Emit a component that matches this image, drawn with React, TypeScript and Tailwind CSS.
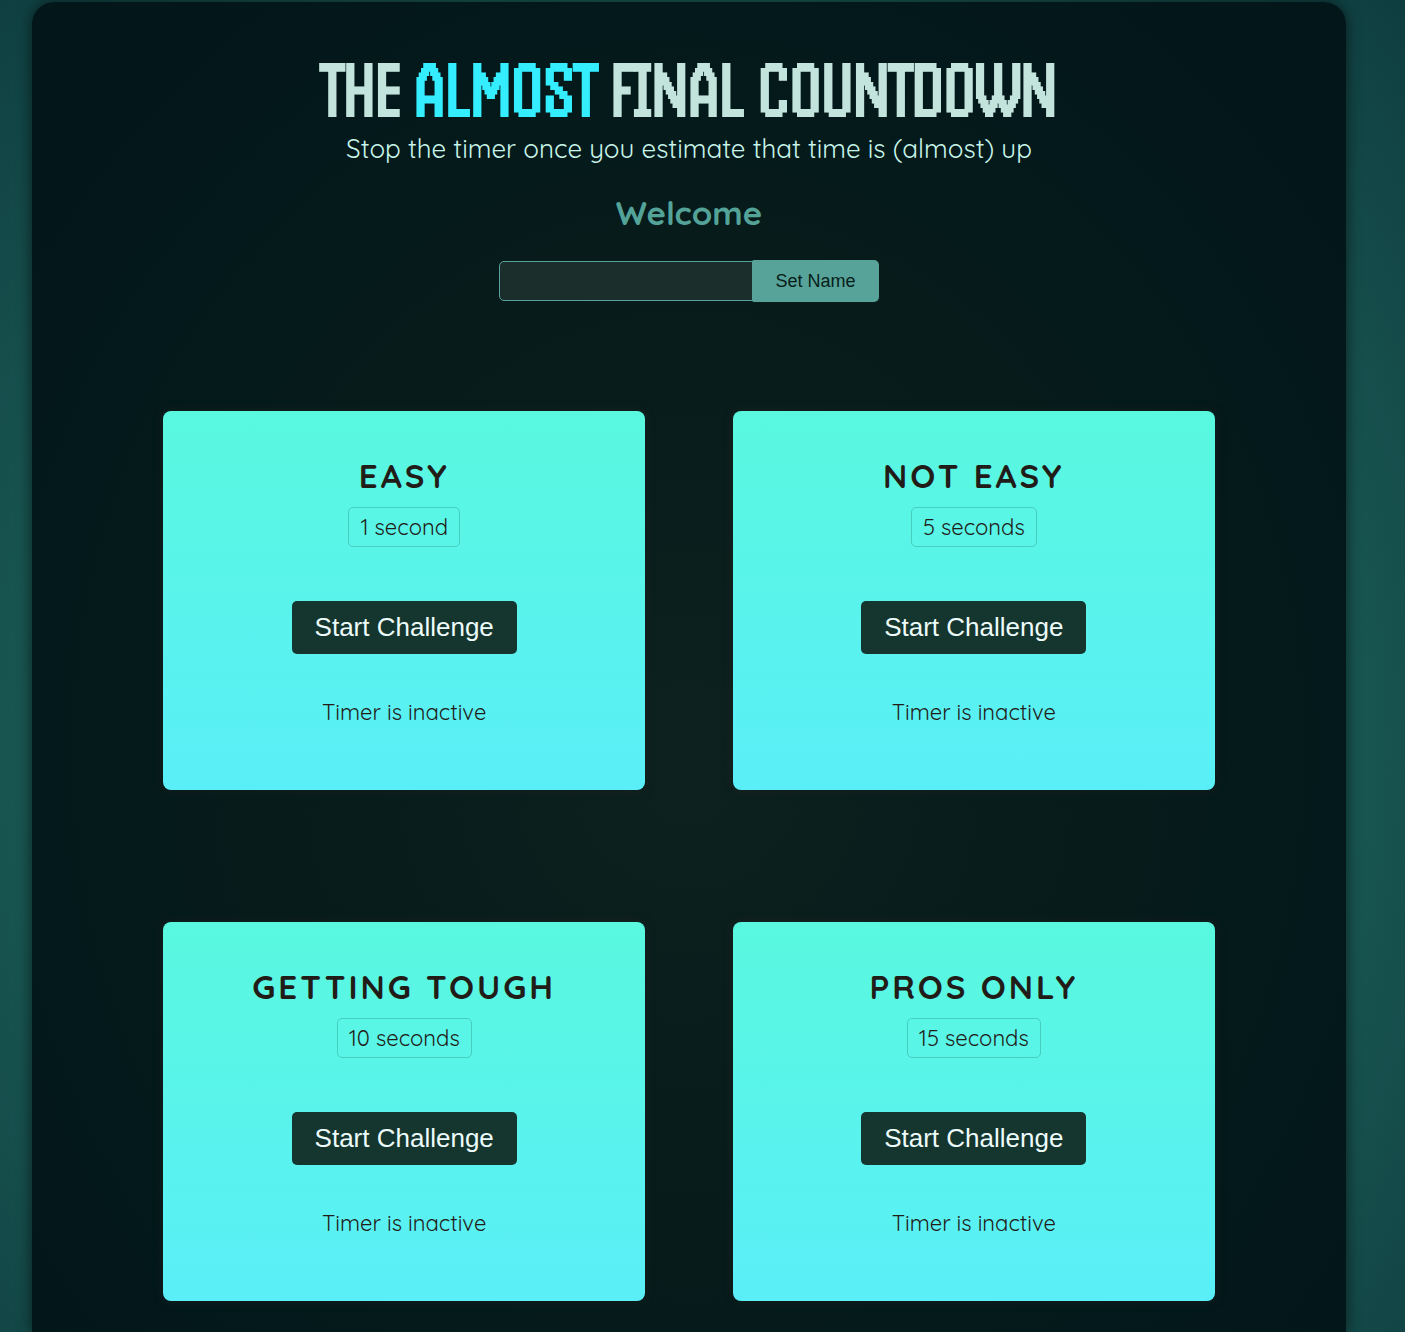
import { useState } from 'react';

type Challenge = { title: string; seconds: number };

const challenges: Challenge[] = [
  { title: 'Easy', seconds: 1 },
  { title: 'Not easy', seconds: 5 },
  { title: 'Getting tough', seconds: 10 },
  { title: 'Pros only', seconds: 15 },
];

function Player() {
  const [draft, setDraft] = useState('');
  const [name, setName] = useState('');
  return (
    <section className="mt-[27px] text-center">
      <h2 className="text-[33px] leading-[41px] font-bold text-[#54a399]">Welcome{name && ` ${name}`}</h2>
      <form
        className="mt-[27px] flex items-center justify-center"
        onSubmit={(e) => {
          e.preventDefault();
          setName(draft);
        }}
      >
        <input
          type="text"
          aria-label="Player name"
          value={draft}
          onChange={(e) => setDraft(e.target.value)}
          className="h-10 w-[254px] rounded-l-[5px] border border-[#54a399] bg-[#1c2e2c] px-2 font-['Liberation_Sans',Arial,sans-serif] text-lg text-[#d1f0e9] outline-none"
        />
        <button
          type="submit"
          className="-ml-px h-[42px] rounded-[2px] rounded-r-[5px] bg-[#58a399] px-[23px] font-['Liberation_Sans',Arial,sans-serif] text-lg text-[#061e1a]"
        >
          Set Name
        </button>
      </form>
    </section>
  );
}

function ChallengeCard({ title, seconds }: Challenge) {
  const [active, setActive] = useState(false);
  return (
    <section className="flex flex-col items-center rounded-lg bg-[linear-gradient(#59f8df,#5aeff8)] px-11 pt-11 pb-16 text-[#221c18] shadow-[0_0_10px_rgba(35,34,34,0.6)]">
      <h2 className="text-center text-[33px] leading-[41px] font-bold tracking-[3px] uppercase">{title}</h2>
      <p className="mt-[11px] rounded-[5px] border border-[#46cebe] px-[11px] py-[5px] text-[22px] leading-7">
        {seconds} second{seconds > 1 ? 's' : ''}
      </p>
      <button
        type="button"
        onClick={() => setActive(!active)}
        className="mt-[54px] h-[53px] rounded-[5px] bg-[#15352f] px-[23px] font-['Liberation_Sans',Arial,sans-serif] text-[26px] text-[#edfcfa]"
      >
        {active ? 'Stop' : 'Start'} Challenge
      </button>
      <p className="mt-11 text-[22px] leading-7">{active ? 'Time is running...' : 'Timer is inactive'}</p>
    </section>
  );
}

export default function App() {
  return (
    <div className="min-h-screen bg-[radial-gradient(974px_1154px_at_689px_750px,#2f8c77,#0e3c3f)] pt-0.5 pr-[59px] pl-8 font-['Quicksand',Lato,sans-serif]">
      <main className="min-h-[calc(100vh-2px)] rounded-t-[22px] bg-[radial-gradient(930px_1059px_at_50%_750px,#0d211e,#061b1a_50%,#03181b_75%,#03161a)] px-[10%] pt-[54px] pb-8 shadow-[0_0_15px_rgba(0,0,0,0.6)]">
        <header className="text-center">
          <h1 className="font-['Handjet','Open_Sans_Condensed','Roboto_Condensed',sans-serif] text-[77px] leading-[68px] font-extrabold text-[#c3e4dc]">
            THE <em className="text-[#34edff] not-italic">ALMOST</em> FINAL COUNTDOWN
          </h1>
          <p className="mt-[9px] text-[26px] leading-8 text-[#c8f5ea]">
            Stop the timer once you estimate that time is (almost) up
          </p>
        </header>
        <Player />
        <div className="mt-[109px] grid grid-cols-2 gap-x-[88px] gap-y-[132px]">
          {challenges.map((challenge) => (
            <ChallengeCard key={challenge.title} {...challenge} />
          ))}
        </div>
      </main>
    </div>
  );
}
